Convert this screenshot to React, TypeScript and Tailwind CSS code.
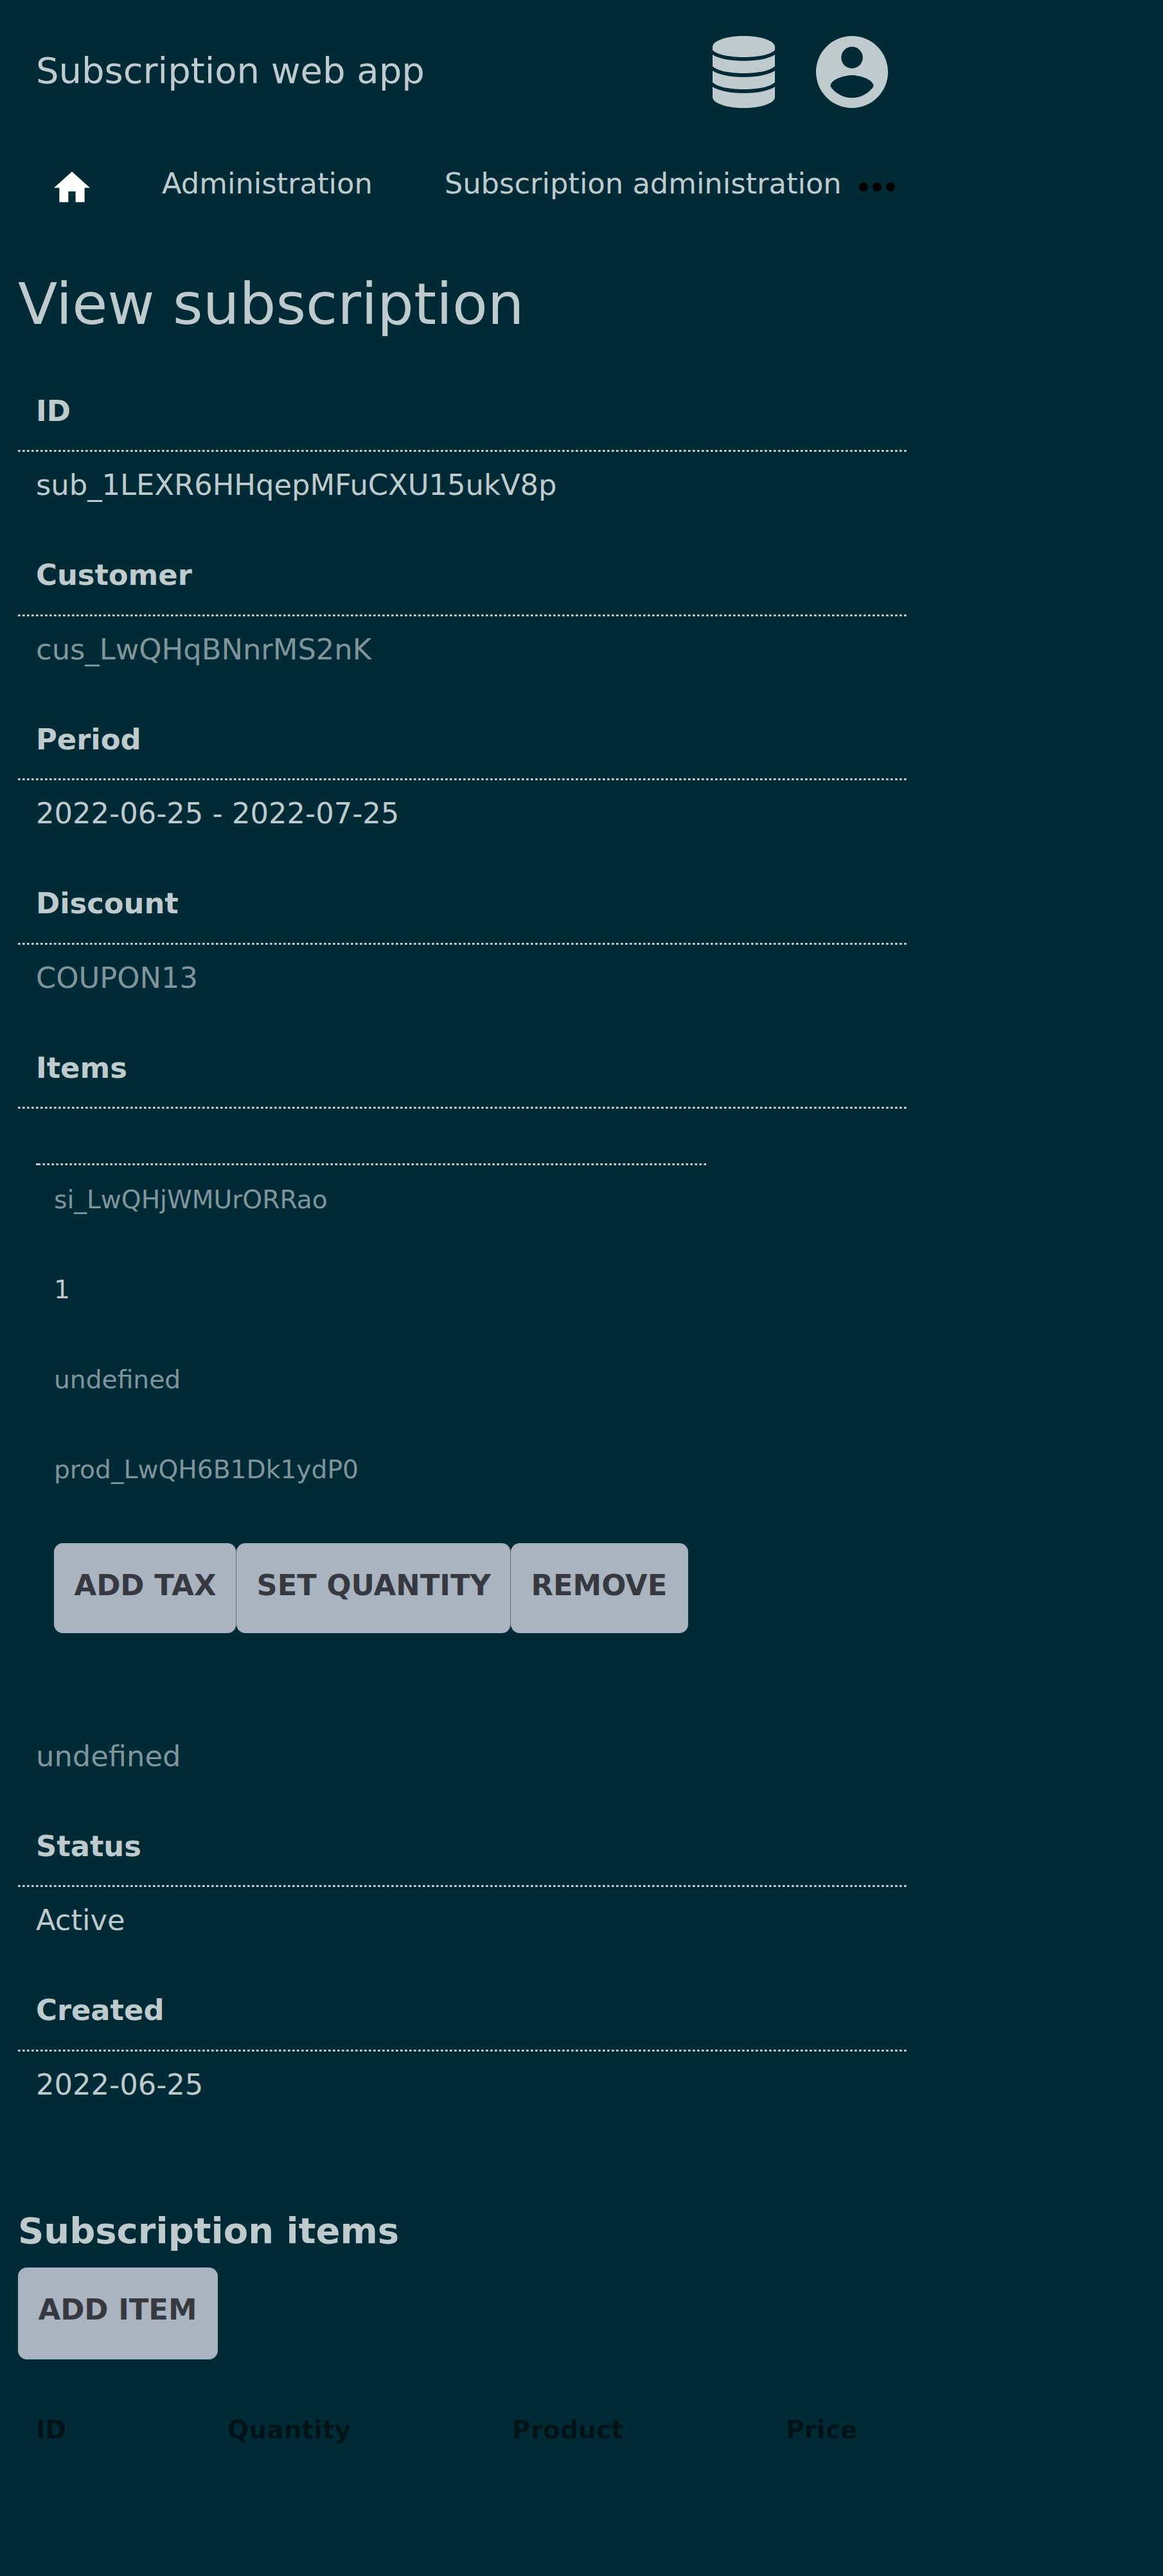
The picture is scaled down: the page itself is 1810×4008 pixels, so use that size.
import type { ReactNode } from "react";

function DottedRule() {
  return (
    <div className="h-[3.5px]">
      <div className="h-[3px] bg-[repeating-linear-gradient(90deg,#c3cdd0_0_3px,#7b8d93_3px_4px,transparent_4px_7px)]" />
    </div>
  );
}

function DatabaseIcon() {
  return (
    <svg className="block h-[112px] w-[97px]" viewBox="0 0 97 112" fill="currentColor">
      <path d="M0 17C0 7.5 21.5 0 48.5 0S97 7.5 97 17v5C90 29 71 33 48.5 33S7 29 0 22Z" />
      <path d="M0 29C9 35 27 38.800 48.500 38.800S88 35 97 29v18C90 54 71 58 48.500 58S7 54 0 47Z" />
      <path d="M0 54C9 60 27 64 48.500 64S88 60 97 54v18C90 79 71 83 48.500 83S7 79 0 72Z" />
      <path d="M0 79C9 85 27 89 48.500 89S88 85 97 79v16C97 104.500 75.500 112 48.500 112S0 104.500 0 95Z" />
    </svg>
  );
}

function AccountIcon() {
  return (
    <svg className="block size-[112px]" viewBox="2 2 20 20" fill="currentColor">
      <path d="M12 2C6.480 2 2 6.480 2 12s4.480 10 10 10 10-4.480 10-10S17.520 2 12 2zm0 3c1.660 0 3 1.340 3 3s-1.340 3-3 3-3-1.340-3-3 1.340-3 3-3zm0 14.200c-2.500 0-4.710-1.280-6-3.220.030-1.990 4-3.080 6-3.080 1.990 0 5.970 1.090 6 3.080-1.290 1.940-3.500 3.220-6 3.220z" />
    </svg>
  );
}

function Field({ label, children }: { label: string; children: ReactNode }) {
  return (
    <div className="h-[255.5px]">
      <div className="px-7 pt-[27.5px] pb-[32.5px] font-bold">{label}</div>
      <DottedRule />
      <div className="px-7 pt-[23.5px]">{children}</div>
    </div>
  );
}

function Button({ children, className }: { children: ReactNode; className: string }) {
  return (
    <button
      className={`flex shrink-0 items-start rounded-[14px] bg-[#a9b4c0] pt-[38px] pl-[31.5px] text-left font-bold leading-[56px] whitespace-nowrap text-[#363a40] ${className}`}
    >
      {children}
    </button>
  );
}

const itemRows = [
  { text: "si_LwQHjWMUrORRao", dim: true },
  { text: "1", dim: false },
  { text: "undefined", dim: true },
  { text: "prod_LwQH6B1Dk1ydP0", dim: true },
];

export default function App() {
  return (
    <div className="h-[4008px] w-[1810px] overflow-hidden bg-[#002b36] font-['DejaVu_Sans',sans-serif] text-[44.8px] leading-[56px] text-[#bfcacd]">
      <div className="w-[1411px] pl-7">
        <header className="flex h-[224px] items-start justify-between pt-14 pr-[29px] pl-7">
          <div className="-mt-px text-[56px] leading-[110px]">Subscription web app</div>
          <div className="flex gap-[64px]">
            <DatabaseIcon />
            <AccountIcon />
          </div>
        </header>
        <nav className="flex h-[180px] items-start whitespace-nowrap">
          <svg className="mt-[43px] ml-14 h-[47.6px] w-[56px] shrink-0 text-white" viewBox="2 3 20 17" fill="currentColor">
            <path d="M10 20v-6h4v6h5v-8h3L12 3 2 12h3v8z" />
          </svg>
          <a className="mt-[33.5px] ml-[112px]">Administration</a>
          <a className="mt-[33.5px] ml-[112px]">Subscription administration</a>
          <svg className="mt-[59.5px] ml-[27px] h-[14px] w-[56px] shrink-0 text-black" viewBox="0 0 16 4" fill="currentColor">
            <circle cx="2" cy="2" r="2" />
            <circle cx="8" cy="2" r="2" />
            <circle cx="14" cy="2" r="2" />
          </svg>
        </nav>
        <h1 className="h-[180px] pt-[13px] text-[89.6px] leading-[112px]">View subscription</h1>

        <Field label="ID">sub_1LEXR6HHqepMFuCXU15ukV8p</Field>
        <Field label="Customer">
          <span className="text-[#80959b]">cus_LwQHqBNnrMS2nK</span>
        </Field>
        <Field label="Period">2022-06-25 - 2022-07-25</Field>
        <Field label="Discount">
          <span className="text-[#80959b]">COUPON13</span>
        </Field>

        <section className="h-[1211px]">
          <div className="px-7 pt-[27.5px] pb-[32.5px] font-bold">Items</div>
          <DottedRule />
          <div className="w-[1071px] pt-[84px] pl-7">
            <div className="flex">
              <div className="h-[3px] w-[7px] bg-[#c3cdd0]" />
              <div className="ml-[3px] h-[3px] flex-1 bg-[repeating-linear-gradient(90deg,#7b8d93_0_1px,#c3cdd0_1px_4px,transparent_4px_7px)]" />
            </div>
            <div className="pl-7 text-[39.2px]">
              {itemRows.map((row) => (
                <div key={row.text} className={row.dim ? "h-[140px] pt-[26px] text-[#80959b]" : "h-[140px] pt-[26px]"}>
                  {row.text}
                </div>
              ))}
            </div>
            <div className="flex pt-[28.5px] pl-7">
              <Button className="h-[140px] w-[284px] border-r border-[#5b7681]">ADD TAX</Button>
              <Button className="h-[140px] w-[427px] border-r border-[#5b7681]">SET QUANTITY</Button>
              <Button className="h-[140px] w-[276px]">REMOVE</Button>
            </div>
          </div>
          <div className="pt-[163.5px] pl-7 text-[#80959b]">undefined</div>
        </section>

        <Field label="Status">Active</Field>
        <Field label="Created">2022-06-25</Field>

        <h2 className="h-[200px] pt-[108px] text-[56px] leading-[70px] font-bold">Subscription items</h2>
        <Button className="h-[143px] w-[311px]">ADD ITEM</Button>
        <div className="mt-[82px] flex text-[39.2px] font-bold text-[#001418]">
          <div className="w-[298px] pl-7">ID</div>
          <div className="w-[443px] pl-7">Quantity</div>
          <div className="w-[426px] pl-7">Product</div>
          <div className="pl-7">Price</div>
        </div>
      </div>
    </div>
  );
}
